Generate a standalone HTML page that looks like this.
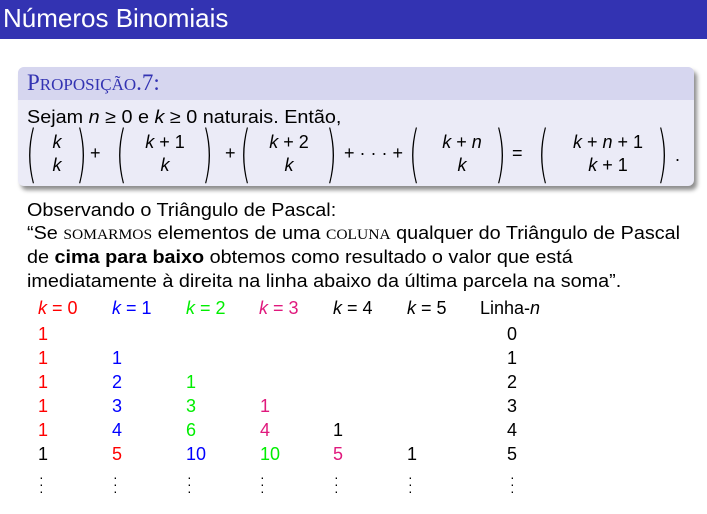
<!DOCTYPE html>
<html><head><meta charset="utf-8"><style>
body{margin:0;width:707px;height:514px;background:#fff;position:relative;overflow:hidden;font-family:"Liberation Sans",sans-serif;color:#000}
.a{position:absolute;white-space:nowrap}
.hdr{position:absolute;left:0;top:0;width:707px;height:39px;background:#3333b2}
.box{position:absolute;left:18px;top:67px;width:676px;height:119px;border-radius:6px;background:#ebebf7;box-shadow:3px 4px 4px rgba(0,0,0,.45);overflow:hidden}
.box .t{position:absolute;left:0;top:0;width:676px;height:33px;background:#d6d6ef}
.t1{font-size:18.5px;line-height:22px;transform:scaleX(1.07);transform-origin:left top}
.sc{font-family:"Liberation Serif",serif;font-size:14.5px;text-transform:uppercase}
.p{font-size:62px;font-weight:100;transform:scaleX(.45);transform-origin:left top;line-height:62px;font-family:"DejaVu Sans",sans-serif}
.m{font-size:18px;text-align:center;line-height:23px}
i{font-style:italic}
.r{color:#ff0000}.b{color:#0000ff}.g{color:#00ee00}.pk{color:#e0197d}
.col{font-size:18px}
</style></head><body>
<div class="hdr"></div>
<div class="a" style="left:3px;top:3px;font-size:26px;color:#fff;line-height:30px">Números Binomiais</div>
<div class="box"><div class="t"></div></div>
<div class="a" style="left:27px;top:70px;font-family:'Liberation Serif',serif;color:#3333b2;font-size:23px;line-height:26px">P<span style="font-size:17px">ROPOSIÇÃO</span>.7:</div>
<div class="a t1" style="left:27px;top:106px">Sejam <i>n</i> ≥ 0 e <i>k</i> ≥ 0 naturais. Então,</div>
<!-- formula -->
<div class="a p" style="left:26px;top:123px">(</div>
<div class="a m" style="left:42px;top:131px;width:30px"><i>k</i><br><i>k</i></div>
<div class="a p" style="left:76px;top:123px">)</div>
<div class="a m" style="left:90px;top:142px">+</div>
<div class="a p" style="left:116px;top:123px">(</div>
<div class="a m" style="left:140px;top:131px;width:50px"><i>k</i> + 1<br><i>k</i></div>
<div class="a p" style="left:202px;top:123px">)</div>
<div class="a m" style="left:225px;top:142px">+</div>
<div class="a p" style="left:240px;top:123px">(</div>
<div class="a m" style="left:264px;top:131px;width:50px"><i>k</i> + 2<br><i>k</i></div>
<div class="a p" style="left:326px;top:123px">)</div>
<div class="a m" style="left:344px;top:142px">+ · · · +</div>
<div class="a p" style="left:409px;top:123px">(</div>
<div class="a m" style="left:436px;top:131px;width:52px"><i>k</i> + <i>n</i><br><i>k</i></div>
<div class="a p" style="left:495px;top:123px">)</div>
<div class="a m" style="left:512px;top:142px">=</div>
<div class="a p" style="left:538px;top:123px">(</div>
<div class="a m" style="left:564px;top:131px;width:88px"><i>k</i> + <i>n</i> + 1<br><i>k</i> + 1</div>
<div class="a p" style="left:657px;top:123px">)</div>
<div class="a m" style="left:675px;top:144px">.</div>

<div class="a t1" style="left:27px;top:199px">Observando o Triângulo de Pascal:</div>
<div class="a t1" style="left:27px;top:222px">“Se <span class="sc">somarmos</span> elementos de uma <span class="sc">coluna</span> qualquer do Triângulo de Pascal</div>
<div class="a t1" style="left:27px;top:246px">de <b>cima para baixo</b> obtemos como resultado o valor que está</div>
<div class="a t1" style="left:27px;top:270px">imediatamente à direita na linha abaixo da última parcela na soma”.</div>

<div class="a col r" style="left:38px;top:298px"><i>k</i> = 0</div>
<div class="a col b" style="left:112px;top:298px"><i>k</i> = 1</div>
<div class="a col g" style="left:186px;top:298px"><i>k</i> = 2</div>
<div class="a col pk" style="left:259px;top:298px"><i>k</i> = 3</div>
<div class="a col" style="left:333px;top:298px"><i>k</i> = 4</div>
<div class="a col" style="left:407px;top:298px"><i>k</i> = 5</div>
<div class="a col" style="left:480px;top:298px">Linha-<i>n</i></div>

<div class="a col r" style="left:38px;top:322px;line-height:24px">1<br>1<br>1<br>1<br>1</div>
<div class="a col" style="left:38px;top:442px;line-height:24px">1</div>
<div class="a col b" style="left:112px;top:346px;line-height:24px">1<br>2<br>3<br>4</div>
<div class="a col r" style="left:112px;top:442px;line-height:24px">5</div>
<div class="a col g" style="left:186px;top:370px;line-height:24px">1<br>3<br>6</div>
<div class="a col b" style="left:186px;top:442px;line-height:24px">10</div>
<div class="a col pk" style="left:260px;top:394px;line-height:24px">1<br>4</div>
<div class="a col g" style="left:260px;top:442px;line-height:24px">10</div>
<div class="a col" style="left:333px;top:418px;line-height:24px">1</div>
<div class="a col pk" style="left:333px;top:442px;line-height:24px">5</div>
<div class="a col" style="left:407px;top:442px;line-height:24px">1</div>
<div class="a col" style="left:507px;top:322px;line-height:24px">0<br>1<br>2<br>3<br>4<br>5</div>
<div class="a col" style="left:39px;top:474px;line-height:7px;font-size:14px">·<br>·<br>·</div>
<div class="a col" style="left:113px;top:474px;line-height:7px;font-size:14px">·<br>·<br>·</div>
<div class="a col" style="left:187px;top:474px;line-height:7px;font-size:14px">·<br>·<br>·</div>
<div class="a col" style="left:260px;top:474px;line-height:7px;font-size:14px">·<br>·<br>·</div>
<div class="a col" style="left:334px;top:474px;line-height:7px;font-size:14px">·<br>·<br>·</div>
<div class="a col" style="left:408px;top:474px;line-height:7px;font-size:14px">·<br>·<br>·</div>
<div class="a col" style="left:510px;top:474px;line-height:7px;font-size:14px">·<br>·<br>·</div>
</body></html>
